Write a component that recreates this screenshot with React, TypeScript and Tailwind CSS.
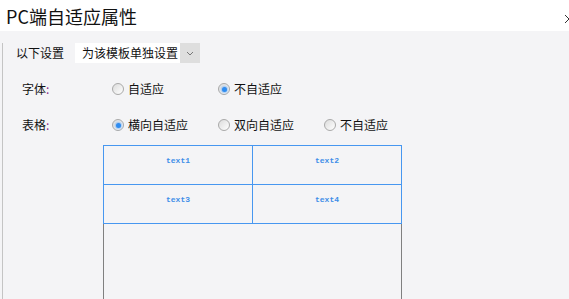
const cjk = { fontFamily: '"Noto Sans CJK SC", "Noto Sans", sans-serif' };

function Radio({ checked, label }: { checked?: boolean; label: string }) {
  return (
    <div className="flex items-center">
      <span className="flex h-[12px] w-[12px] items-center justify-center rounded-full border border-[#a9a9a9] bg-gradient-to-br from-[#dcdcdc] to-white">
        {checked && (
          <span className="h-[5px] w-[5px] rounded-full bg-[#2f8cf0] shadow-[0_0_2px_1px_rgba(90,160,240,0.6)]" />
        )}
      </span>
      <span className="ml-[4px] text-[12px] leading-[16px] text-[#111]">{label}</span>
    </div>
  );
}

const cells = ["text1", "text2", "text3", "text4"];

export default function App() {
  return (
    <div
      className="relative h-[299px] w-[569px] overflow-hidden bg-[#f4f4f6]"
      style={cjk}
    >
      {/* title bar */}
      <div className="flex h-[31px] items-center bg-white pl-[6px]">
        <span className="text-[18px] leading-[24px] text-[#111]">PC端自适应属性</span>
        <svg className="ml-auto mr-[-5px] mt-[7px]" width="10" height="10" viewBox="0 0 10 10">
          <path d="M1 1 L9 9 M9 1 L1 9" stroke="#333" strokeWidth="1" />
        </svg>
      </div>

      <div className="h-[268px] pl-[2px]">
        <div className="h-full border-l border-[#c4c4c4]">
          {/* 以下设置 */}
          <div className="mt-[12px] flex h-[20px] items-center pl-[13px]">
            <span className="w-[48px] text-[12px] leading-[16px] text-[#111]">以下设置</span>
            <div className="ml-[11px] flex h-[20px]">
              <div className="flex w-[105px] items-center bg-white pl-[7px] text-[12px] text-[#111]">
                为该模板单独设置
              </div>
              <div className="flex w-[20px] items-center justify-center bg-[#dedede]">
                <svg width="8" height="5" viewBox="0 0 8 5">
                  <path d="M1 1 L4 4 L7 1" stroke="#777" strokeWidth="1" fill="none" />
                </svg>
              </div>
            </div>
          </div>

          {/* 字体 */}
          <div className="mt-[16px] flex h-[20px] items-center pl-[19px]">
            <span className="w-[90px] text-[12px] leading-[16px] text-[#111]">
              字体<span className="text-[#8a2a8a]">:</span>
            </span>
            <div className="w-[106px]">
              <Radio label="自适应" />
            </div>
            <Radio checked label="不自适应" />
          </div>

          {/* 表格 */}
          <div className="mt-[16px] flex h-[20px] items-center pl-[19px]">
            <span className="w-[90px] text-[12px] leading-[16px] text-[#111]">
              表格<span className="text-[#8a2a8a]">:</span>
            </span>
            <div className="w-[106px]">
              <Radio checked label="横向自适应" />
            </div>
            <div className="w-[106px]">
              <Radio label="双向自适应" />
            </div>
            <Radio label="不自适应" />
          </div>

          {/* table preview */}
          <div className="ml-[100px] mt-[10px] w-[299px]">
            <div className="grid grid-cols-[149px_149px] border-l border-t border-[#4797f0]">
              {cells.map((c) => (
                <div
                  key={c}
                  className="h-[39px] border-b border-r border-[#4797f0] pt-[10px] text-center text-[8px] font-bold leading-[10px] text-[#3f8ee8]"
                  style={{ fontFamily: '"Liberation Mono", monospace' }}
                >
                  {c}
                </div>
              ))}
            </div>
            <div className="h-[90px] border-x border-[#808080]" />
          </div>
        </div>
      </div>
    </div>
  );
}
